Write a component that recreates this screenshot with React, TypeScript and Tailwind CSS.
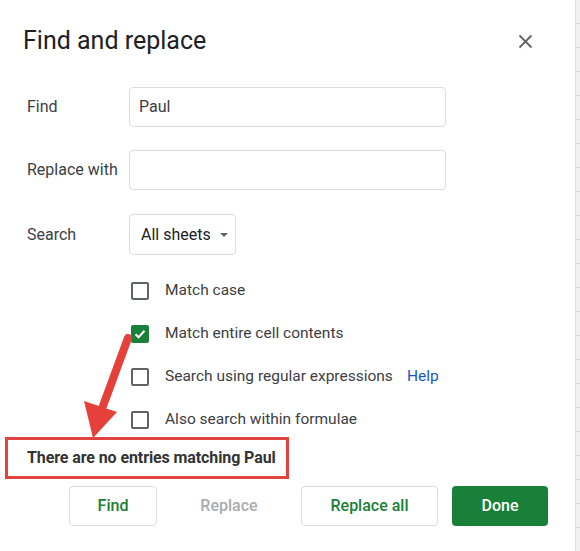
import { useState } from "react";

const rows = Array.from({ length: 23 }, (_, i) => i);

const Check = ({ checked, label, help }: { checked?: boolean; label: string; help?: boolean }) => (
  <div className="flex h-[43px] items-center pt-[1px]">
    {checked ? (
      <div className="ml-[2px] flex h-[18px] w-[18px] items-center justify-center rounded-[2px] bg-[#188038]">
        <svg width="14" height="14" viewBox="0 0 14 14">
          <path d="M2.5 7.2 L5.6 10.2 L11.5 3.8" fill="none" stroke="#fff" strokeWidth="2" />
        </svg>
      </div>
    ) : (
      <div className="ml-[2px] h-[18px] w-[18px] rounded-[2px] border-2 border-[#5f6368]" />
    )}
    <span className="ml-[16px] text-[15.5px] text-[#3c4043]">{label}</span>
    {help && <span className="ml-[14px] text-[15.5px] text-[#1a55c8]">Help</span>}
  </div>
);

export default function App() {
  const [find] = useState("Paul");

  return (
    <div className="flex h-[551px] w-[580px] overflow-hidden bg-white font-['Roboto',sans-serif]">
      <div className="relative flex-1">
        {/* header */}
        <div className="flex items-center justify-between pl-[23px] pr-[42px] pt-[26px]">
          <h1 className="text-[25px] leading-[30px] text-[#202124]">Find and replace</h1>
          <svg width="15" height="15" viewBox="0 0 15 15" className="mt-[1px]">
            <path d="M1.5 1.5 L13.5 13.5 M13.5 1.5 L1.5 13.5" stroke="#5f6368" strokeWidth="1.8" />
          </svg>
        </div>

        {/* form */}
        <div className="mt-[31px] pl-[27px]">
          <div className="flex h-[40px] items-center">
            <span className="w-[102px] text-[16px] text-[#3c4043]">Find</span>
            <div className="flex h-[40px] w-[317px] items-center rounded-[4px] border border-[#dadce0] px-[9px] text-[16px] text-[#3c4043]">
              {find}
            </div>
          </div>
          <div className="mt-[23px] flex h-[40px] items-center">
            <span className="w-[102px] text-[16px] text-[#3c4043]">Replace with</span>
            <div className="h-[40px] w-[317px] rounded-[4px] border border-[#dadce0]" />
          </div>
          <div className="mt-[24px] flex h-[41px] items-center">
            <span className="w-[102px] text-[16px] text-[#3c4043]">Search</span>
            <div className="flex h-[41px] w-[107px] items-center rounded-[4px] border border-[#dadce0] pl-[11px] text-[16px] text-[#202124]">
              All sheets
              <svg width="8" height="4" viewBox="0 0 8 4" className="ml-[9px]">
                <path d="M0 0 L8 0 L4 4 Z" fill="#5f6368" />
              </svg>
            </div>
          </div>

          <div className="mt-[14px] pl-[102px]">
            <Check label="Match case" />
            <Check checked label="Match entire cell contents" />
            <Check label="Search using regular expressions" help />
            <Check label="Also search within formulae" />
          </div>
        </div>

        {/* message */}
        <div className="ml-[5px] mt-[-4px] flex h-[42px] w-[284px] items-center border-[3px] border-[#e0443e] pl-[19px] text-[16px] font-bold tracking-[-0.1px] text-[#333333]">
          There are no entries matching Paul
        </div>

        {/* buttons */}
        <div className="ml-[69px] mt-[7px] flex h-[40px] items-center text-[16px] font-medium">
          <button className="h-[40px] w-[88px] rounded-[4px] border border-[#dadce0] text-[#188038]">Find</button>
          <button className="h-[40px] w-[144px] text-[#a8abaf]">Replace</button>
          <button className="h-[40px] w-[137px] rounded-[4px] border border-[#dadce0] text-[#188038]">Replace all</button>
          <button className="ml-[14px] h-[40px] w-[96px] rounded-[4px] bg-[#188038] text-white">Done</button>
        </div>

        {/* annotation arrow */}
        <svg className="absolute left-0 top-0" width="200" height="551" viewBox="0 0 200 551">
          <path d="M128 338 L103 406" stroke="#e5403a" strokeWidth="8" strokeLinecap="round" />
          <path d="M84 401 L117 412 L93 438 Z" fill="#e5403a" />
        </svg>
      </div>

      {/* spreadsheet edge */}
      <div className="flex w-[5px] flex-col border-l border-[#e0e0e0] bg-[#f1f1f1]">
        {rows.map((r) => (
          <div key={r} className="h-[24px] shrink-0 border-b border-[#d9d9d9]" />
        ))}
      </div>
    </div>
  );
}
